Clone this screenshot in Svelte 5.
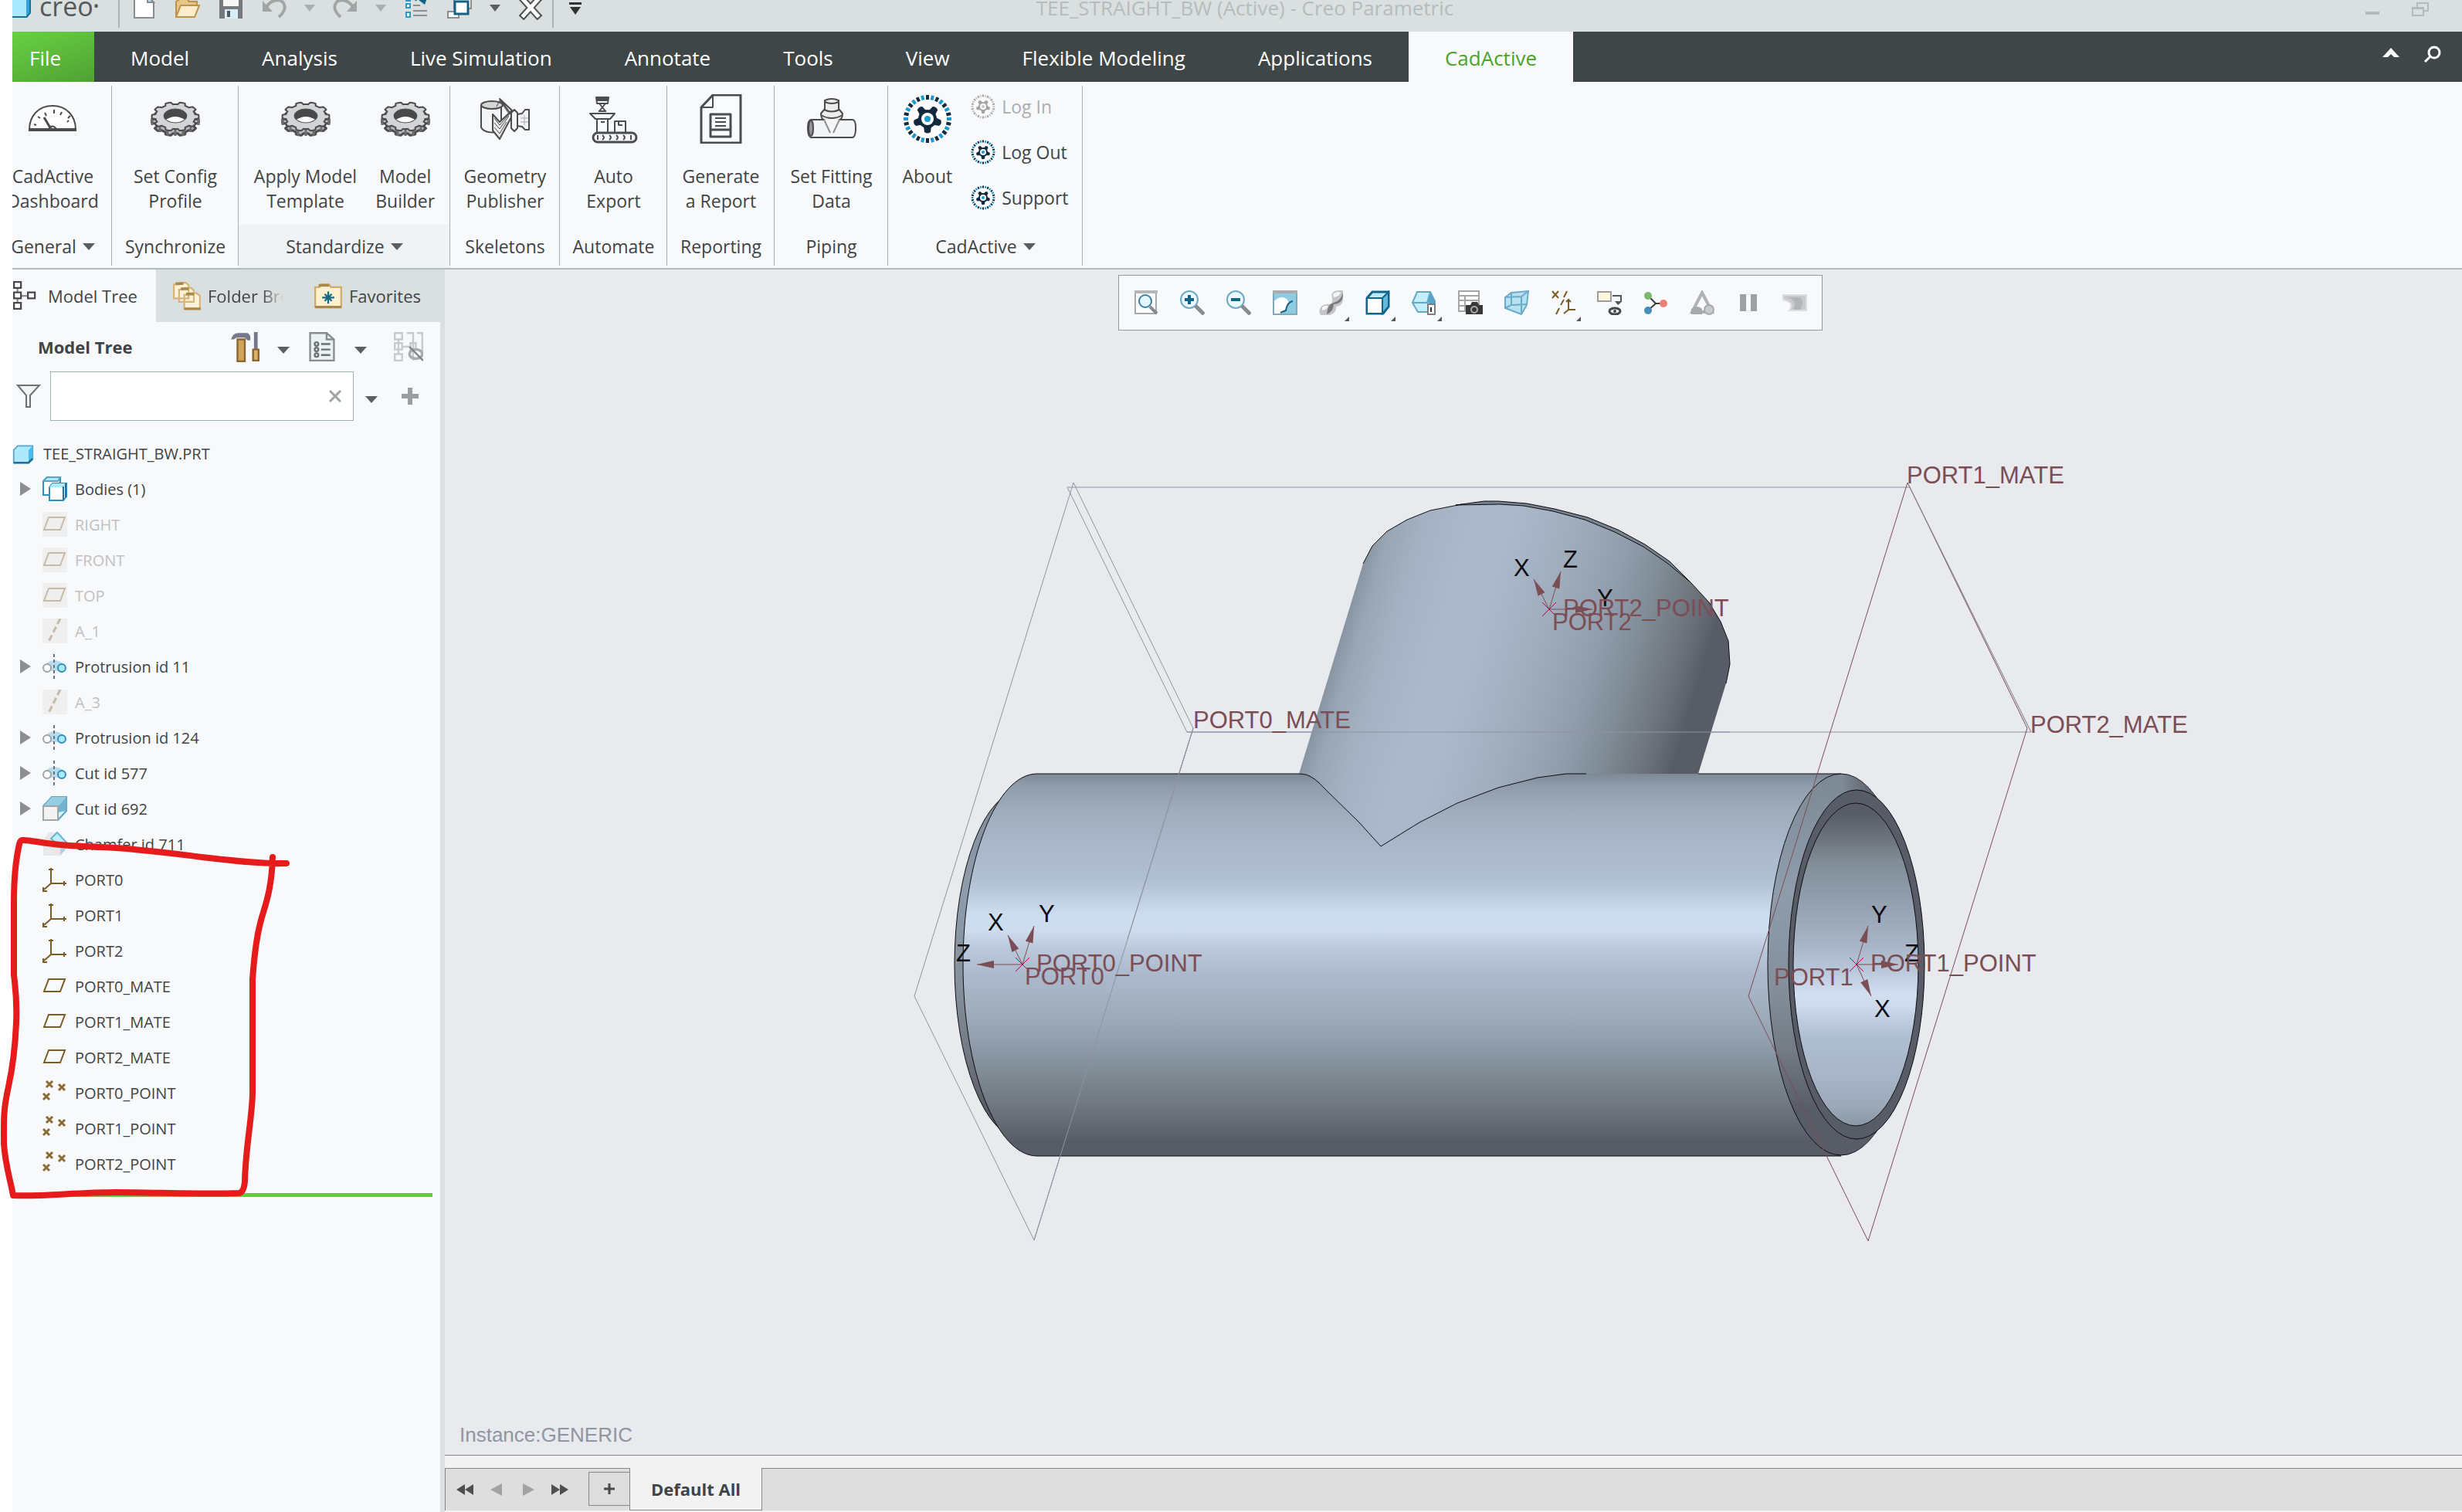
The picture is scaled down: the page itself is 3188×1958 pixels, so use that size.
<script>
	let search = "";

	const tabs = ["Model", "Analysis", "Live Simulation", "Annotate", "Tools", "View", "Flexible Modeling", "Applications", "CadActive"];
	let activeTab = "CadActive";

	const quick = [
		["new", "New"],
		["open", "Open"],
		["save", "Save"],
		["undo", "Undo"],
		["caret", "Undo list", "dim"],
		["redo", "Redo"],
		["caret", "Redo list", "dim"],
		["regen", "Regenerate"],
		["windows", "Windows"],
		["caret", "Windows list"],
		["close", "Close"],
	];

	const groups = [
		{ title: "General", cls: "general", menu: true, tools: [["gauge", "CadActive", "Dashboard"]] },
		{ title: "Synchronize", cls: "sync", tools: [["gear", "Set Config", "Profile"]] },
		{ title: "Standardize", cls: "standard", menu: true, tools: [["gear", "Apply Model", "Template"], ["gear", "Model", "Builder"]] },
		{ title: "Skeletons", cls: "skel", tools: [["geometry", "Geometry", "Publisher"]] },
		{ title: "Automate", cls: "auto", tools: [["export", "Auto", "Export"]] },
		{ title: "Reporting", cls: "report", tools: [["report", "Generate", "a Report"]] },
		{ title: "Piping", cls: "piping", tools: [["fitting", "Set Fitting", "Data"]] },
		{ title: "CadActive", cls: "cad", menu: true, tools: [["about", "About", ""]], list: ["Log In", "Log Out", "Support"] },
	];

	const viewTools = [
		["refit", "Refit"], ["zoomin", "Zoom In"], ["zoomout", "Zoom Out"], ["repaint", "Repaint"],
		["render", "Rendering Options", true], ["display", "Display Style", true], ["saved", "Saved Orientations", true],
		["manager", "View Manager"], ["persp", "Perspective View"], ["datum", "Datum Display Filters", true],
		["annot", "Annotation Display"], ["spin", "Spin Center"], ["simulate", "Simulate"], ["pause", "Pause"], ["results", "Results"],
	];

	// [icon, label, expandable, dimmed]
	const tree = [
		["bodies", "Bodies (1)", true],
		["plane", "RIGHT", false, true],
		["plane", "FRONT", false, true],
		["plane", "TOP", false, true],
		["axis", "A_1", false, true],
		["revolve", "Protrusion id 11", true],
		["axis", "A_3", false, true],
		["revolve", "Protrusion id 124", true],
		["revolve", "Cut id 577", true],
		["cut", "Cut id 692", true],
		["chamfer", "Chamfer id 711"],
		["csys", "PORT0"],
		["csys", "PORT1"],
		["csys", "PORT2"],
		["plane", "PORT0_MATE"],
		["plane", "PORT1_MATE"],
		["plane", "PORT2_MATE"],
		["points", "PORT0_POINT"],
		["points", "PORT1_POINT"],
		["points", "PORT2_POINT"],
	];

	const ports = [
		{ x: 1324, y: 1249, tips: [[-19, -38], [15, -50], [-59, 0]] },
		{ x: 2404, y: 1249, tips: [[19, 41], [15, -50], [54, 0]] },
		{ x: 2006, y: 789, tips: [[-20, -39], [15, -49], [56, 0]] },
	];

	// arrow head ending at the tip of an axis
	function head([x, y]) {
		const n = Math.hypot(x, y);
		const ux = x / n, uy = y / n;
		const bx = x - ux * 22, by = y - uy * 22;
		return `${x},${y} ${bx - uy * 5},${by + ux * 5} ${bx + uy * 5},${by - ux * 5}`;
	}

	const labels = [
		[1545, 943, "PORT0_MATE"], [2469, 626, "PORT1_MATE"], [2629, 949, "PORT2_MATE"],
		[1342, 1258, "PORT0_POINT"], [1327, 1275, "PORT0"],
		[2422, 1258, "PORT1_POINT"], [2297, 1276, "PORT1"],
		[2024, 798, "PORT2_POINT"], [2010, 816, "PORT2"],
	];

	const axisNames = [
		[1279, 1205, "X"], [1345, 1194, "Y"], [1238, 1245, "Z"],
		[2427, 1317, "X"], [2423, 1195, "Y"], [2466, 1245, "Z"],
		[1960, 746, "X"], [2068, 785, "Y"], [2024, 735, "Z"],
	];

	// outline of the gear seen at an angle
	let gearPath = "";
	for (let i = 0; i < 160; i++) {
		const a = (i / 160) * Math.PI * 2;
		const k = Math.max(-1, Math.min(1, Math.cos(a * 10) * 3)) * 0.07 + 0.91;
		gearPath += `${i ? "L" : "M"}${(32 + Math.cos(a) * 31 * k).toFixed(1)} ${(29 + Math.sin(a) * 19 * k).toFixed(1)}`;
	}
	gearPath += "Z";

	const teeth = [...Array(28).keys()];
	const cogs = [0, 72, 144, 216, 288];
</script>

{#snippet badge()}
	<circle cx="32" cy="32" r="31" fill="#fff" />
	{#each teeth as t}
		<rect x="30" y="1" width="4" height="6" fill={t % 2 ? "#1b9ad2" : "#13293d"} transform="rotate({(t * 360) / 28} 32 32)" />
	{/each}
	{#each cogs as c}
		<path d="M27 41h10l-1 8q-4 3-8 0z" fill="#13293d" transform="rotate({c} 32 32)" />
	{/each}
	<circle cx="32" cy="32" r="12" fill="#13293d" />
	<circle cx="32" cy="32" r="8" fill="#fff" />
	<circle cx="32" cy="32" r="4" fill="#1b9ad2" />
{/snippet}

{#snippet big(name)}
	<svg class="big" viewBox="0 0 64 64" fill="none" stroke="#4b4c4e" stroke-width="2" stroke-linejoin="round" aria-hidden="true">
		{#if name == "gauge"}
			<path d="M2 46C2 28 14 15 32 15s30 13 30 31z" fill="#fff" />
			<path d="M1 46h62" stroke-width="4" />
			<path d="M8 39l3 1M13 29l3 2M22 24l2 4M34 20v5M44 23l-2 4M55 28l-3 3M53 34l-2 2" />
			<path d="M21 30l9 15" stroke-width="3" />
			<path d="M27 45q5-7 10 0" />
		{:else if name == "gear"}
			<path d={gearPath} transform="translate(0 6)" fill="#b9babb" stroke-width="3" />
			<path d="M2 31v9M12 38v11M22 42v12M32 44v10M42 42v12M52 38v11M62 31v9" stroke="#6b6c6e" stroke-width="3" />
			<path d={gearPath} fill="#d3d4d5" />
			<ellipse cx="32" cy="28" rx="15" ry="9" fill="#48494b" stroke-width="1" />
			<path d="M20 33q12-8 24 0-12 7-24 0z" fill="#fff" stroke="none" />
		{:else if name == "geometry"}
			<path d="M1 15v28c4 8 20 8 26 3V15" fill="#f4f5f6" />
			<ellipse cx="15" cy="14" rx="14" ry="5" fill="#d5d6d7" />
			<path d="M25 6l16 22-16 30-9-11V26l9 10 16-15z" fill="#ececed" />
			<path d="M18 31l7 9 15-17M18 37l7 8 12-17M18 43l7 8 9-15M21 16l4-8 11 16" stroke-width="1" />
			<path d="M40 24l4-4 4 4v20l-4 4-4-4zM48 26l6-1 4-5h5v26h-5l-4-4-6-1z" fill="#f4f5f6" />
			<path d="M57 27v13M52 31h10M52 36h10" stroke-width="1" stroke="#a6a7a9" />
		{:else if name == "export"}
			<path d="M10 4h16l-1 8h-14zM14 12l8 10M22 12l-8 10M13 22h10M2 25h32l-6 7H9zM11 33v17h14V33" />
			<path d="M12 5h12v3H12z" fill="#4b4c4e" />
			<path d="M34 50V35h14v15M39 36v4h5M16 36h5" />
			<rect x="6" y="50" width="56" height="12" rx="6" stroke-width="3" />
			<path d="M12 53v6M18 53q4 3 0 6M27 53q4 3 0 6M36 53q4 3 0 6M45 53q4 3 0 6M55 53v6" />
		{:else if name == "report"}
			<path d="M22 1h36v62H7V17z" stroke-width="3" fill="#fafbfc" />
			<path d="M22 1v16H7" />
			<path d="M19 26h26v29H19zM19 46h26" stroke-width="3" />
			<path d="M25 31h14M25 36h14M25 41h14" />
		{:else if name == "fitting"}
			<path d="M23 8q9-4 18 0v11l5 6q0 9-7 9l-5 15h-4l-5-15q-7 0-7-9l5-6z" fill="#ececed" />
			<path d="M23 10q9 4 18 0M22 20q10 5 20 0M18 27q14 8 28 0" />
			<path d="M22 33H5q-4 1-4 11t4 12h54q4-1 4-12t-4-11H42" fill="#f4f5f6" />
			<path d="M22 33l8 17M42 33l-8 17" stroke="#8c8d8f" />
			<ellipse cx="5" cy="44" rx="3" ry="10" fill="#98999b" />
		{:else}
			<g stroke="none">{@render badge()}</g>
		{/if}
	</svg>
{/snippet}

{#snippet icon(name)}
	<svg class="icon" viewBox="0 0 32 32" fill="none" stroke-width="2" aria-hidden="true">
		{#if name == "caret"}
			<path d="M9 12h14l-7 9z" fill="currentColor" />
		{:else if name == "new"}
			<path d="M3 1h17l8 8v20H3z" fill="#fff" stroke="#8b8c8e" />
			<path d="M20 1v8h8z" fill="#b8dcec" stroke="#8b8c8e" />
		{:else if name == "open"}
			<path d="M1 27V8l6-4h8l3 4h10v7" fill="#e7c585" stroke="#bd924a" />
			<path d="M1 28l6-15h24l-6 15z" fill="#ffeccb" stroke="#bd924a" />
			<path d="M22 4h6" stroke="#46474a" stroke-width="4" />
		{:else if name == "save"}
			<path d="M1 0h30v30H1z" fill="#77797c" />
			<path d="M6 0h20v14H6z" fill="#f6f6f7" />
			<path d="M8 18h17v12H8z" fill="#d9eef8" />
			<path d="M11 20h4v8h-4z" fill="#55575a" />
		{:else if name == "undo" || name == "redo"}
			<g transform={name == "redo" ? "translate(32 0) scale(-1 1)" : ""} stroke="#a0a5a5">
				<path d="M6 15C12 5 24 4 28 10s0 13-6 18" stroke-width="4" />
				<path d="M1 7v14h13z" fill="#a0a5a5" stroke="none" />
			</g>
		{:else if name == "regen"}
			<path d="M3 2h5v5H3zM3 11h5v5H3zM3 22h5v6H3z" fill="#fff" stroke="#2b9ac6" />
			<path d="M12 13h9M12 20h18M12 26h18" stroke="#8b8f8f" />
			<path d="M14 6q7-6 12-1" stroke="#146183" stroke-width="4" />
			<path d="M19 6l12-5-4 11z" fill="#146183" />
		{:else if name == "windows"}
			<path d="M9 0h22v17H9zM1 21h14v8H1z" fill="#fff" stroke="#8b8f8f" />
			<path d="M10 8h17v16H10z" fill="#fff" stroke="#146183" stroke-width="3" />
		{:else if name == "close"}
			<path d="M7 6l18 20M25 6L7 26" stroke="#4d5050" stroke-width="9" stroke-linecap="square" />
			<path d="M7 6l18 20M25 6L7 26" stroke="#fff" stroke-width="5" stroke-linecap="square" />
		{:else if name == "cube"}
			<path d="M2 11l6-6h22v19l-6 6H2z" fill="#ade9fd" stroke="#5aa5c3" />
			<path d="M24 11l6-6v19l-6 6z" fill="#4dbdf0" />
			<path d="M2 30h22l6-6" stroke="#1f6f99" stroke-width="3" />
		{:else if name == "treetab"}
			<path d="M5 7v18M5 16h14" stroke="#8b8c8e" />
			<path d="M1 0h8v7H1zM1 12h8v7H1zM1 24h8v7H1zM17 12h8v7h-8z" fill="#fff" stroke="#46474a" />
		{:else if name == "folders"}
			<path d="M1 3h6l2-2h6l3 3v15H1zM7 9h5l2-2h7l3 3v13H7zM13 15h5l2-2h7l4 3v15H13z" fill="#fff3da" stroke="#d8b478" />
			<path d="M3 2h9M9 8h9M15 14h9M13 31h19" stroke="#a9874a" stroke-width="3" />
		{:else if name == "favorites"}
			<path d="M1 6h5l2-3h9l2 3h12v23H1z" fill="#fff0cf" stroke="#d0aa68" />
			<path d="M5 4h12M1 29h30" stroke="#a9874a" stroke-width="3" />
			<path d="M16 11v14M9 18h14M12 14l8 8M20 14l-8 8" stroke="#156784" />
		{:else if name == "tools"}
			<path d="M1 8q2-7 8-7h10q4 2 3 8h-3l-3-3H7L4 8z" fill="#77798a" />
			<path d="M8 8h8v24H8z" fill="#cfa45b" stroke="#8a6530" />
			<path d="M28 0v19" stroke="#77798a" stroke-width="4" />
			<path d="M25 19h6v12h-6z" fill="#dcb268" stroke="#8a6530" />
		{:else if name == "list"}
			<path d="M3 1h18l8 7v23H3z" fill="#eaf2f6" stroke="#898c8f" />
			<path d="M21 1v7h8" stroke="#898c8f" />
			<path d="M15 13h10M15 19h10M15 25h10" stroke="#6d7073" />
			<circle cx="10" cy="13" r="2" stroke="#6d7073" /><circle cx="10" cy="19" r="2" stroke="#6d7073" /><circle cx="10" cy="25" r="2" stroke="#6d7073" />
		{:else if name == "columns"}
			<path d="M1 1h8v7H1zM1 12h8v7H1zM1 24h8v7H1zM5 8v16M9 16h9M14 1h7v30M25 1h6v20M18 12h6v7h-6z" stroke="#c6cacb" />
			<ellipse cx="24" cy="24" rx="7" ry="5" stroke="#a9adae" stroke-width="3" />
			<path d="M17 16l15 15" stroke="#7d8182" />
		{:else if name == "funnel"}
			<path d="M2 2h28L18 15v15h-5V15z" fill="#f2f3f4" stroke="#6d6f71" />
		{:else if name == "plus"}
			<path d="M16 5v22M5 16h22" stroke="#9b9e9f" stroke-width="6" />
		{:else if name == "bodies"}
			<path d="M1 6l5-5h17v19l-4 4H1z" fill="#fff" stroke="#2f8fbc" />
			<path d="M1 6l5-5h17l-3 5H1z" fill="#ade9fd" stroke="#5aa5c3" />
			<path d="M9 14l4-5h18v17l-4 5H9z" fill="#fff" stroke="#2f8fbc" />
			<path d="M9 14l4-5h18l-4 5z" fill="#ade9fd" />
			<path d="M27 13v17M30 9v18" stroke="#1f6f99" />
		{:else if name == "plane"}
			<path d="M8 7h21l-6 16H2z" stroke="#7b5c24" />
		{:else if name == "axis"}
			<path d="M23 0L7 32" stroke="#7b5c24" stroke-width="3" stroke-dasharray="8 4" />
		{:else if name == "revolve"}
			<path d="M3 14q12-12 26 0l-4 8H7z" fill="#b5dcec" />
			<path d="M15 0v32" stroke="#707375" stroke-dasharray="4 3" />
			<ellipse cx="6" cy="18" rx="5" ry="5" fill="#fff" stroke="#a1a4a6" />
			<ellipse cx="25" cy="18" rx="5" ry="5" fill="#ade9fd" stroke="#2f8fbc" />
		{:else if name == "cut"}
			<path d="M1 13L12 1h19v18L20 31H1z" fill="#d8f0fa" stroke="#5aa5c3" />
			<path d="M12 1h19l-11 12H1z" fill="#97cde3" />
			<path d="M31 1v18L20 21v-8z" fill="#74b3cf" />
			<path d="M1 13h19v18H1z" fill="#f3f3f3" stroke="#a3a4a6" />
		{:else if name == "chamfer"}
			<path d="M1 11L8 1h11l12 13v7l-8 10H1z" fill="#e7e8e9" />
			<path d="M19 1l12 13-8 5-12-10z" fill="#bdf0fd" stroke="#68b4d1" />
			<path d="M31 15v7l-8 9V19z" fill="#b3d2df" />
		{:else if name == "csys"}
			<path d="M11 1v20h20M11 21L2 29M8 3h6M28 18v6M1 26v5h5" stroke="#7b5c24" />
		{:else if name == "points"}
			<path d="M5 1l8 8M13 1L5 9M21 5l8 8M29 5l-8 8M1 17l8 8M9 17l-8 8" stroke="#8a6c34" stroke-width="3" />
		{:else if name == "refit"}
			<path d="M2 2h27v28H2z" fill="#fff" stroke="#a6a8aa" /><path d="M1 2h30" stroke="#b5b7b9" stroke-width="4" />
			<circle cx="15" cy="14" r="8" fill="#e5f6fd" stroke="#347fa3" /><path d="M21 21l9 9" stroke="#898b8d" stroke-width="4" />
		{:else if name == "zoomin" || name == "zoomout"}
			<circle cx="12" cy="12" r="11" fill="#eaf8fe" stroke="#6faac5" /><path d="M20 20l11 11" stroke="#898b8d" stroke-width="5" />
			<path d={name == "zoomin" ? "M12 6v12M6 12h12" : "M6 12h12"} stroke="#11648c" stroke-width="4" />
		{:else if name == "repaint"}
			<path d="M1 3h30v28H1z" fill="#8fcbe2" stroke="#82a9ba" />
			<path d="M2 30V14q8-8 16-3 5 4 1 11l-7 8z" fill="#fff" />
			<path d="M26 14q-7 1-9 12l-7 3" stroke="#1b5c7a" /><path d="M0 2h32" stroke="#a9abad" stroke-width="4" />
		{:else if name == "render"}
			<path d="M16 6q2-6 9-6h6v13q-1 7-9 8 1 8-8 11H2q-4-7 2-12 4-3 10-2 5-1 2-12z" fill="#c4c5c7" />
			<path d="M31 3q1 14-12 15 0 9-9 13l1-6q1-7 8-9 9-2 12-13z" fill="#77797b" />
			<path d="M18 5q6-5 10-2-2 5-9 6zM4 22q5-4 8-1-2 4-8 5z" fill="#f6f6f7" />
		{:else if name == "display"}
			<path d="M2 10L9 2h21v19l-7 9H2z" fill="#bdeafb" stroke="#11648c" stroke-width="3" /><path d="M2 10h20v20H2z" fill="#fff" stroke="#11648c" /><path d="M22 10l8-8v19l-8 9z" fill="#63b7dc" stroke="#11648c" />
		{:else if name == "saved"}
			<path d="M1 16L7 2h17l6 12v14H8z" fill="#c5edfb" stroke="#62a9c8" /><path d="M24 2l6 12v6l-9-4z" fill="#55a5cb" /><path d="M1 16h19l4-14" stroke="#62a9c8" /><path d="M21 18h9v13h-9z" fill="#fff" stroke="#7b7d80" /><path d="M25 22v6" stroke="#333" />
		{:else if name == "manager"}
			<path d="M1 1h26v26H1zM1 7h26M1 13h26M1 20h16M9 7v20" fill="#fff" stroke="#a3a5a7" /><path d="M10 19h6l2-4h7l2 4h5v12H10z" fill="#37383a" /><circle cx="21" cy="25" r="4" stroke="#aaa" />
		{:else if name == "persp"}
			<path d="M1 9L9 3l22-2-2 18-7 12L1 23z" fill="#b7e0f0" stroke="#69abc8" /><path d="M9 3v16L1 23M9 19l20-1M22 31V8L1 9M22 8l9-7" stroke="#69abc8" />
		{:else if name == "datum"}
			<path d="M2 1l8 9M10 1L2 10M21 1l-4 8M17 12l-4 7M11 23l-4 8M23 12v13h9M23 25l-6 5M20 15l3-3 3 3" stroke="#7b5c24" />
		{:else if name == "annot"}
			<path d="M1 2h17v12H1z" fill="#fff6e0" stroke="#9b9d9f" /><path d="M20 7h11v7l-4 4" stroke="#55585a" /><path d="M23 14h8l-4 5z" fill="#55585a" /><ellipse cx="23" cy="27" rx="7" ry="4" stroke="#46494b" stroke-width="3" /><circle cx="23" cy="27" r="2" fill="#46494b" />
		{:else if name == "spin"}
			<path d="M6 7l10 10h10M16 17L6 26" stroke="#3b3d3f" /><circle cx="6" cy="7" r="5" fill="#7db872" /><circle cx="26" cy="17" r="5" fill="#e98078" /><circle cx="6" cy="26" r="5" fill="#448fb8" />
		{:else if name == "simulate"}
			<path d="M16 3l13 25H3z" stroke="#b0b2b4" stroke-width="4" /><path d="M2 24q8-6 14 0v7H2z" fill="#a6a8aa" /><circle cx="25" cy="25" r="6" fill="#c9cacc" stroke="#a6a8aa" />
		{:else if name == "pause"}
			<path d="M9 5v22M23 5v22" stroke="#9d9fa1" stroke-width="8" />
		{:else if name == "results"}
			<path d="M1 6h30v20H9q8-10-8-14z" fill="#c9cacc" stroke="#dcddde" /><path d="M7 9q13 4 7 16h9q6-10 0-16z" fill="#b3b5b7" />
		{/if}
	</svg>
{/snippet}

<div class="app">
	<header class="titlebar">
		<svg class="logo" viewBox="0 0 24 24" aria-hidden="true">
			<path d="M0 0h24v17l-5 6H0z" fill="#1d6f96" />
			<path d="M0 0h18v21H0z" fill="#a9e9fd" />
			<path d="M18 0h4v16l-4 5z" fill="#35a5d6" />
		</svg>
		<span class="brand">creo<sup>•</sup></span>
		<i class="sep"></i>
		<div class="quick">
			{#each quick as [name, label, cls]}
				<button class="q {name == 'caret' ? 'narrow' : ''} {cls ?? ''}" aria-label={label}>{@render icon(name)}</button>
			{/each}
		</div>
		<i class="sep"></i>
		<button class="q more" aria-label="Customize toolbar">
			<svg class="icon" viewBox="0 0 32 32"><path d="M8 9h16v3H8zM9 15h14l-7 10z" fill="#2f3233" /></svg>
		</button>
		<h1>TEE_STRAIGHT_BW (Active) - Creo Parametric</h1>
		<div class="wincontrols">
			<button aria-label="Minimize"><svg viewBox="0 0 24 24"><path d="M3 15h18v4H3z" fill="#b4b9ba" /></svg></button>
			<button aria-label="Restore"><svg viewBox="0 0 24 24" fill="none" stroke="#b4b9ba" stroke-width="2"><path d="M8 9V4h14v10h-5M2 10h14v10H2zM2 11h14" /></svg></button>
		</div>
	</header>

	<nav class="tabs">
		<button class="file">File</button>
		{#each tabs as tab}
			<button class:active={tab == activeTab} on:click={() => (activeTab = tab)}>{tab}</button>
		{/each}
		<div class="navright">
			<button aria-label="Minimize the ribbon"><svg viewBox="0 0 24 24"><path d="M1 16L12 4l11 12h-7l-4-4-4 4z" fill="#fff" /></svg></button>
			<button aria-label="Command search"><svg viewBox="0 0 24 24" fill="none" stroke="#fff" stroke-width="3"><circle cx="14" cy="10" r="7" /><path d="M9 15l-7 7" /></svg></button>
		</div>
	</nav>

	<section class="ribbon">
		{#each groups as g}
			<div class="group {g.cls}">
				<div class="grouptools">
					{#each g.tools as [name, a, b]}
						<button class="tool">{@render big(name)}<span>{a}<br />{b}</span></button>
					{/each}
					{#if g.list}
						<div class="smalls">
							{#each g.list as item}
								<button class="small" class:off={item == "Log In"}>
									<svg viewBox="0 0 64 64" aria-hidden="true">{@render badge()}</svg>{item}
								</button>
							{/each}
						</div>
					{/if}
				</div>
				<div class="grouptitle">{g.title}{#if g.menu}<i class="down"></i>{/if}</div>
			</div>
		{/each}
	</section>

	<main>
		<aside>
			<div class="sidetabs">
				<button class="on">{@render icon("treetab")}Model Tree</button>
				<button class="folder">{@render icon("folders")}<span>Folder Bro</span></button>
				<button class="fav">{@render icon("favorites")}Favorites</button>
			</div>
			<div class="sidehead">
				<h2>Model Tree</h2>
				<button aria-label="Settings">{@render icon("tools")}</button>
				<button class="mini" aria-label="Settings menu"><i class="down"></i></button>
				<button aria-label="Show">{@render icon("list")}</button>
				<button class="mini" aria-label="Show menu"><i class="down"></i></button>
				<button class="last" aria-label="Tree columns">{@render icon("columns")}</button>
			</div>
			<div class="filter">
				{@render icon("funnel")}
				<div class="box">
					<input type="text" aria-label="Filter the model tree" bind:value={search} />
					<button aria-label="Clear" on:click={() => (search = "")}>
						<svg viewBox="0 0 16 16"><path d="M1 1l14 14M15 1L1 15" stroke="#a0a3a4" stroke-width="3" /></svg>
					</button>
				</div>
				<button class="mini" aria-label="Filter options"><i class="down"></i></button>
				<button class="add" aria-label="Add filter">{@render icon("plus")}</button>
			</div>
			<div class="treewrap">
				<ul class="tree">
					<li class="root">{@render icon("cube")}TEE_STRAIGHT_BW.PRT</li>
					{#each tree as [name, label, open, dim]}
						<li class:dim>
							<span class="expander">{#if open}<i class="right"></i>{/if}</span>
							<span class="ticon">{@render icon(name)}</span>
							{label}
						</li>
					{/each}
				</ul>
				<div class="insert"></div>
				<svg class="marker" viewBox="0 1080 380 480" fill="none" stroke="#e61c1c" stroke-width="8" stroke-linecap="round" stroke-linejoin="round" aria-hidden="true">
					<path d="M371 1118C340 1119 305 1115 271 1111S180 1099 132 1097 72 1094 48 1090 27 1088 25 1093C20 1115 18 1140 18 1168V1263C21 1285 22 1302 21 1325S18 1375 11 1407 5 1450 5 1481C7 1510 14 1530 17 1548C50 1550 100 1544 150 1544S260 1547 310 1545Q316 1543 317 1530C318 1486 326 1450 327 1417V1268C330 1225 334 1205 339 1188S352 1150 353 1110" />
				</svg>
			</div>
		</aside>

		<div class="work">
			<div class="canvas">
				<svg viewBox="576 349 2612 1535" class="scene">
					<defs>
						<linearGradient id="run" gradientUnits="userSpaceOnUse" x1="0" y1="1002" x2="0" y2="1497">
							<stop offset="0" stop-color="#7c8893" />
							<stop offset=".03" stop-color="#909cab" />
							<stop offset=".1" stop-color="#a0adbd" />
							<stop offset=".2" stop-color="#abb8cb" />
							<stop offset=".28" stop-color="#b1c0d3" />
							<stop offset=".33" stop-color="#c0cfe1" />
							<stop offset=".37" stop-color="#cfdeef" />
							<stop offset=".41" stop-color="#ceddee" />
							<stop offset=".46" stop-color="#bac8da" />
							<stop offset=".52" stop-color="#adbacd" />
							<stop offset=".62" stop-color="#a0adbd" />
							<stop offset=".7" stop-color="#929eae" />
							<stop offset=".77" stop-color="#828e98" />
							<stop offset=".86" stop-color="#717981" />
							<stop offset=".91" stop-color="#666b76" />
							<stop offset=".96" stop-color="#575c66" />
						</linearGradient>
						<linearGradient id="branch" gradientUnits="userSpaceOnUse" x1="1682" y1="1002" x2="2156" y2="1146">
							<stop offset="0" stop-color="#8794a2" />
							<stop offset=".04" stop-color="#98a5b4" />
							<stop offset=".12" stop-color="#a4b1c2" />
							<stop offset=".24" stop-color="#abb8cb" />
							<stop offset=".34" stop-color="#abb8cb" />
							<stop offset=".5" stop-color="#a0adbd" />
							<stop offset=".64" stop-color="#929eae" />
							<stop offset=".75" stop-color="#7f8b95" />
							<stop offset=".84" stop-color="#70777f" />
							<stop offset=".88" stop-color="#676c78" />
							<stop offset=".93" stop-color="#575c66" />
						</linearGradient>
						<linearGradient id="bore" gradientUnits="userSpaceOnUse" x1="0" y1="1040" x2="0" y2="1459">
							<stop offset=".03" stop-color="#575c66" />
							<stop offset=".1" stop-color="#6b7079" />
							<stop offset=".18" stop-color="#808c96" />
							<stop offset=".29" stop-color="#919dad" />
							<stop offset=".43" stop-color="#a6b3c4" />
							<stop offset=".51" stop-color="#b7c5d8" />
							<stop offset=".59" stop-color="#d2dff0" />
							<stop offset=".63" stop-color="#cddaeb" />
							<stop offset=".72" stop-color="#afbed1" />
							<stop offset=".84" stop-color="#a8b5c8" />
							<stop offset=".94" stop-color="#9ba8b8" />
							<stop offset="1" stop-color="#8996a3" />
						</linearGradient>
						<linearGradient id="bevel" gradientUnits="userSpaceOnUse" x1="0" y1="1002" x2="0" y2="1497">
							<stop offset="0" stop-color="#7c8893" />
							<stop offset=".3" stop-color="#8f9cac" />
							<stop offset=".55" stop-color="#84909c" />
							<stop offset=".72" stop-color="#747c85" />
							<stop offset=".8" stop-color="#666b76" />
							<stop offset=".88" stop-color="#575c66" />
						</linearGradient>
						<linearGradient id="shade" gradientUnits="userSpaceOnUse" x1="2385" y1="0" x2="2430" y2="0">
							<stop offset="0" stop-color="#575c66" stop-opacity="0" />
							<stop offset="1" stop-color="#575c66" />
						</linearGradient>
					</defs>

					<g fill="none" stroke="#8f93a2" stroke-width="1">
						<path d="M1390 625L1545 943L1339 1606L1184 1290z" />
						<path d="M1382 631H2473L2630 948H1537z" />
					</g>

					<g stroke="#0d0d12" stroke-width="1">
						<path d="M1682 1002L1765 730L1777 707L1796 688L1822 673L1852 661L1893 653L1922 649L1940 649L1977 652L2013 659L2056 670L2095 686L2130 705L2162 727L2189 754L2213 780L2228 805L2238 830L2240 860L2235 885L2199 1002z" fill="url(#branch)" stroke="none" />
						<path d="M1885 654L1922 649L1940 649L1977 652L2013 659L2056 670L2095 686L2130 705L2162 727L2189 754L2160 730L2128 708L2091 689L2052 673L2011 662L1973 655L1942 653z" fill="#77838f" />
						<path d="M1765 730L1777 707L1796 688L1822 673L1852 661L1893 653M2189 754L2213 780L2228 805L2238 830L2240 860L2235 885" fill="none" />

						<ellipse cx="1324" cy="1249" rx="88" ry="226" fill="url(#bevel)" />
						<path d="M1343 1002H2384V1497H1343C1290 1497 1247 1386 1247 1249S1290 1002 1343 1002z" fill="url(#run)" stroke="none" />
						<path d="M1682 1002L1691 1003Q1703 1007 1715 1021L1760 1065L1788 1096L1838 1065L1887 1040L1940 1020L1991 1007L2028 1002z" fill="url(#branch)" stroke="none" />
						<path d="M1682 1002L1691 1003Q1703 1007 1715 1021L1760 1065L1788 1096L1838 1065L1887 1040L1940 1020L1991 1007L2028 1002H2054" fill="none" />
						<path d="M1682 1002H1343C1290 1002 1247 1113 1247 1249S1290 1497 1343 1497H2384M2199 1002H2384" fill="none" />

						<ellipse cx="2384" cy="1249" rx="95" ry="247" fill="url(#bevel)" />
						<ellipse cx="2384" cy="1249" rx="95" ry="247" fill="url(#shade)" stroke="none" />
						<ellipse cx="2404" cy="1249" rx="88" ry="226" fill="#575c66" />
						<ellipse cx="2403" cy="1249" rx="81" ry="209" fill="url(#bore)" />
					</g>

					<path d="M1537 948H2240M1460 1216L1545 943L1339 1606" fill="none" stroke="#8f93a2" stroke-width="1" />
					<path d="M2470 625L2625 943L2419 1607L2264 1290z" fill="none" stroke="#7b4e55" stroke-width="1" />
					<path d="M2473 631L2630 948" stroke="#8f93a2" />

					<g class="axes">
						{#each axisNames as [x, y, t]}
							<text {x} {y}>{t}</text>
						{/each}
					</g>
					{#each ports as p}
						<g transform="translate({p.x} {p.y})" stroke="#7b4e55" fill="#7b4e55">
							{#each p.tips as tip}
								<path d="M0 0L{tip[0]} {tip[1]}" />
								<polygon points={head(tip)} stroke="none" />
							{/each}
							<path d="M-9 -9L9 9M9 -9L-9 9" stroke="#b0005c" />
						</g>
					{/each}
					<g class="names">
						{#each labels as [x, y, t]}
							<text {x} {y}>{t}</text>
						{/each}
					</g>
					<text class="instance" x="595" y="1867">Instance:GENERIC</text>
				</svg>

				<div class="viewbar">
					{#each viewTools as [name, label, menu]}
						<button aria-label={label} class:menu>{@render icon(name)}</button>
					{/each}
				</div>
			</div>

			<footer>
				<div class="bar">
					<div class="navs">
						<button aria-label="First"><svg viewBox="0 0 24 16"><path d="M1 8L12 1v14zM12 8l11-7v14z" fill="#4f4f4f" /></svg></button>
						<button aria-label="Previous"><svg viewBox="0 0 24 16"><path d="M4 8l15-8v16z" fill="#a3a3a3" /></svg></button>
						<button aria-label="Next"><svg viewBox="0 0 24 16"><path d="M20 8L5 0v16z" fill="#a3a3a3" /></svg></button>
						<button aria-label="Last"><svg viewBox="0 0 24 16"><path d="M23 8L12 1v14zM12 8L1 1v14z" fill="#4f4f4f" /></svg></button>
					</div>
					<button class="plus" aria-label="New tab"><svg viewBox="0 0 16 16"><path d="M8 1v14M1 8h14" stroke="#4a4a4a" stroke-width="3" /></svg></button>
					<button class="sheet">Default All</button>
				</div>
			</footer>
		</div>
	</main>
</div>

<style>
	:global(body) {
		margin: 0;
		background: #fff;
	}

	.app {
		min-height: 100vh;
		padding-left: 16px;
		box-sizing: border-box;
		display: flex;
		flex-direction: column;
		overflow: hidden;
		font-family: "Open Sans", "Noto Sans", sans-serif;
		font-size: 22px;
		color: #414446;
	}

	button {
		font: inherit;
		color: inherit;
		background: none;
		border: 0;
		padding: 0;
		margin: 0;
		white-space: nowrap;
	}

	svg {
		display: block;
		flex: none;
	}

	.icon {
		width: 32px;
		height: 32px;
	}

	.down {
		display: inline-block;
		border: 8px solid transparent;
		border-top: 9px solid #5c5f61;
		border-bottom: 0;
	}

	.right {
		display: block;
		border: 9px solid transparent;
		border-left: 14px solid #8d8e90;
		border-right: 0;
	}

	/* title bar */
	.titlebar {
		position: relative;
		display: flex;
		height: 41px;
		background: #dae0df;
		overflow: hidden;
	}

	.logo {
		width: 24px;
		height: 24px;
	}

	.brand {
		width: 102px;
		margin-left: 11px;
		font-size: 34px;
		line-height: 16px;
		color: #56595a;
	}

	.brand sup {
		font-size: 20px;
		line-height: 0;
		vertical-align: 6px;
	}

	.sep {
		width: 2px;
		height: 36px;
		background: #aeb3b3;
	}

	.quick {
		display: flex;
		padding-left: 4px;
	}

	.q {
		display: flex;
		justify-content: center;
		width: 56px;
		height: 26px;
		align-items: flex-end;
		color: #5c5f60;
	}

	.q.narrow {
		width: 36px;
	}

	.q.dim {
		color: #a9afaf;
	}

	h1 {
		position: absolute;
		left: 50%;
		top: -10px;
		transform: translateX(-50%);
		margin: 0 0 0 10px;
		font-size: 26px;
		line-height: 40px;
		font-weight: 400;
		color: #b6bcbd;
		white-space: nowrap;
	}

	.wincontrols {
		display: flex;
		gap: 38px;
		margin-left: auto;
		padding-right: 42px;
	}

	.wincontrols svg,
	.navright svg {
		width: 24px;
		height: 24px;
	}

	.wincontrols button {
		height: 20px;
		align-self: flex-start;
	}

	/* ribbon tabs */
	.tabs {
		display: flex;
		height: 65px;
		background: #3e4647;
		color: #fff;
		font-size: 26px;
	}

	.tabs > button {
		padding: 2px 47px 0;
	}

	.tabs .file {
		width: 106px;
		padding: 2px 0 0 22px;
		text-align: left;
		background: linear-gradient(160deg, #67d143, #50a133);
	}

	.tabs .active {
		background: #f8f9fb;
		color: #4aa32a;
	}

	.navright {
		display: flex;
		gap: 30px;
		margin-left: auto;
		padding: 0 26px 8px 0;
		align-items: center;
	}

	/* ribbon */
	.ribbon {
		display: flex;
		height: 243px;
		box-sizing: border-box;
		background: #f8f9fb;
		border-bottom: 2px solid #b0bec3;
		overflow: hidden;
		font-size: 23px;
	}

	.group {
		position: relative;
		display: flex;
		flex-direction: column;
		flex: none;
	}

	.group::after {
		content: "";
		position: absolute;
		top: 5px;
		bottom: 3px;
		right: 0;
		width: 1px;
		background: #a9adb1;
	}

	.general {
		width: 153px;
		margin-left: -24px;
	}

	.sync {
		width: 164px;
	}

	.standard {
		width: 274px;
	}

	.skel {
		width: 142px;
	}

	.auto,
	.report {
		width: 139px;
	}

	.piping {
		width: 147px;
	}

	.cad {
		width: 252px;
	}

	.grouptools {
		flex: 1;
		display: flex;
		justify-content: center;
		align-items: flex-start;
		gap: 24px;
		padding-top: 16px;
	}

	.tool {
		display: flex;
		flex-direction: column;
		align-items: center;
		gap: 26px;
		line-height: 32px;
	}

	.big {
		width: 64px;
		height: 64px;
	}

	.grouptitle {
		display: flex;
		align-items: center;
		justify-content: center;
		gap: 8px;
		height: 56px;
	}

	.standard .grouptitle {
		background: #eff3f6;
	}

	.smalls {
		display: flex;
		flex-direction: column;
		gap: 27px;
	}

	.small {
		display: flex;
		align-items: center;
		gap: 8px;
		line-height: 32px;
	}

	.small svg {
		width: 32px;
		height: 32px;
	}

	.off {
		color: #abaeb0;
	}

	.off svg {
		filter: grayscale(1);
		opacity: 0.4;
	}

	/* left panel */
	main {
		flex: 1;
		display: flex;
	}

	aside {
		width: 554px;
		flex: none;
		background: #f8f9fb;
		border-right: 6px solid #d9e0df;
	}

	.sidetabs {
		display: flex;
		height: 68px;
		background: #dae0df;
	}

	.sidetabs button {
		display: flex;
		align-items: center;
		gap: 9px;
		padding-left: 22px;
	}

	.sidetabs button.on {
		width: 186px;
		box-sizing: border-box;
		padding-left: 1px;
		background: #f8f9fb;
	}

	.sidetabs button.fav {
		padding-left: 40px;
	}

	.sidetabs .icon {
		width: 36px;
		height: 38px;
	}

	.folder span {
		width: 98px;
		overflow: hidden;
		text-align: left;
		mask-image: linear-gradient(90deg, #000 72%, transparent);
	}

	.sidehead {
		display: flex;
		align-items: center;
		height: 64px;
		padding-left: 33px;
	}

	h2 {
		flex: 1;
		margin: 0;
		font-size: 22px;
		font-weight: 700;
	}

	.sidehead .icon {
		width: 38px;
		height: 40px;
	}

	.mini {
		width: 62px;
	}

	.last {
		padding: 0 22px 0 12px;
	}

	.filter {
		display: flex;
		align-items: center;
		height: 64px;
		padding-left: 5px;
		gap: 12px;
	}

	.box {
		display: flex;
		align-items: center;
		width: 393px;
		height: 64px;
		box-sizing: border-box;
		border: 1px solid #9fb0b1;
		background: #fff;
	}

	.box input {
		flex: 1;
		height: 60px;
		min-width: 0;
		border: 0;
		outline: 0;
		padding: 0 10px;
		font: inherit;
		background: none;
	}

	.box svg {
		width: 16px;
		height: 16px;
		margin-right: 15px;
	}

	.filter .mini {
		width: 20px;
		margin-left: 1px;
	}

	.add {
		margin-left: 12px;
	}

	.treewrap {
		position: relative;
		margin-top: 19px;
	}

	.tree {
		list-style: none;
		margin: 0;
		padding: 0;
		font-size: 20px;
	}

	.tree li {
		display: flex;
		align-items: center;
		height: 46px;
	}

	.root .icon {
		width: 28px;
		height: 28px;
		margin-right: 12px;
	}

	.expander {
		width: 29px;
		padding-left: 10px;
	}

	.ticon {
		margin-right: 10px;
	}

	.tree .dim {
		color: #bfc1c2;
	}

	.dim .ticon {
		background: #efefef;
	}

	.dim .ticon .icon {
		opacity: 0.35;
	}

	.insert {
		height: 5px;
		margin: 15px 10px 0 0;
		background: #64c840;
	}

	.marker {
		position: absolute;
		left: -16px;
		top: 516px;
		width: 380px;
		height: 480px;
	}

	/* graphics area */
	.work {
		flex: 1;
		display: flex;
		flex-direction: column;
		min-width: 0;
	}

	.canvas {
		position: relative;
		flex: 1;
		background: #e8eaed;
		border-bottom: 1px solid #868889;
	}

	.scene {
		position: absolute;
		inset: 0;
		width: 100%;
		height: 100%;
		font-family: "Liberation Sans", Arial, sans-serif;
		font-size: 31px;
	}

	.names {
		fill: #7b4e55;
	}

	.axes {
		fill: #0d0d12;
	}

	.instance {
		font-size: 26px;
		fill: #8f95a3;
	}

	.viewbar {
		position: absolute;
		top: 7px;
		left: 50%;
		transform: translateX(-50%);
		margin-left: 22px;
		display: flex;
		height: 72px;
		padding: 0 5px;
		box-sizing: border-box;
		background: #f8f9fb;
		border: 1px solid #97999b;
	}

	.viewbar button {
		position: relative;
		width: 60px;
		display: flex;
		align-items: center;
		justify-content: center;
	}

	.menu::after {
		content: "";
		position: absolute;
		right: 7px;
		bottom: 11px;
		border-left: 6px solid transparent;
		border-bottom: 6px solid #55585a;
	}

	footer {
		padding: 16px 0 2px;
		background: #f2f2f2;
	}

	.bar {
		display: flex;
		height: 54px;
		background: #dedede;
		border: 1px solid #868889;
		border-width: 1px 0 0 1px;
	}

	.navs {
		display: flex;
		width: 185px;
		padding-left: 4px;
		box-sizing: border-box;
	}

	.navs button {
		width: 41px;
	}

	.navs svg {
		width: 24px;
		height: 16px;
		margin: auto;
	}

	.plus {
		width: 53px;
		margin: 4px 0 6px;
		border: 1px solid #868889;
		border-right: 0;
	}

	.plus svg {
		width: 16px;
		height: 16px;
		margin: auto;
	}

	.sheet {
		width: 172px;
		margin-top: -1px;
		font-weight: 700;
		background: #f2f2f2;
		border: 1px solid #868889;
		border-top: 0;
	}
</style>
